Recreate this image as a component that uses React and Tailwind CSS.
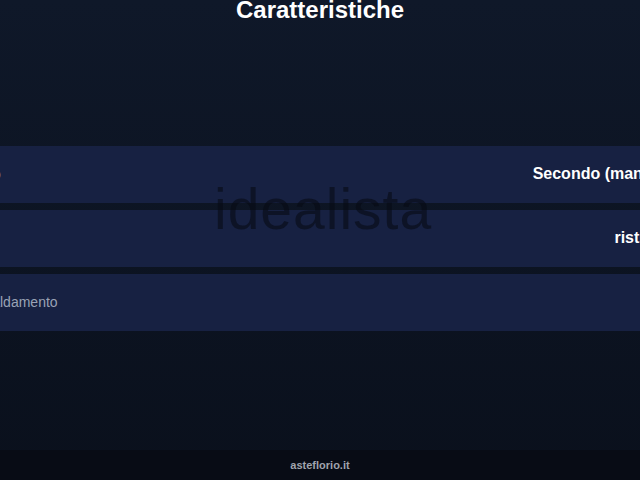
const righe = [
    { campo: "Piano", valore: "Secondo (mansardato)" },
    { campo: "Stato", valore: "ristrutturato" },
    { campo: "Riscaldamento", valore: "" },
]

const Riga = ({ campo, valore }) => (
    <div className="flex h-[57px] items-center justify-between bg-[#172142] px-4 pb-0.5">
        <span className="text-sm text-[#9aa3b5]">{campo}</span>
        <span className="text-base font-bold text-white">{valore}</span>
    </div>
)

const App = () => {
    return (
        <div className="relative flex h-[480px] w-[640px] flex-col overflow-hidden bg-gradient-to-b from-[#0f1829] to-[#0a101c] font-['Liberation_Sans',Arial,sans-serif]">
            <h1 className="-mt-0.5 text-center text-2xl font-bold leading-none text-white">Caratteristiche</h1>

            <div className="-ml-[51px] mt-[124px] flex w-[773px] flex-col gap-[7px]">
                {righe.map((r, i) => (
                    <Riga key={i} campo={r.campo} valore={r.valore} />
                ))}
            </div>

            <div className="pointer-events-none absolute left-[214px] top-[181px] text-[57px] leading-none tracking-[1px] text-[#060a14]/60">
                idealista
            </div>

            <div className="mt-auto flex h-[30px] items-center justify-center bg-[#080c15]">
                <span className="text-[11px] font-bold text-[#a0a4ad]">asteflorio.it</span>
            </div>
        </div>
    )
}

export default App
